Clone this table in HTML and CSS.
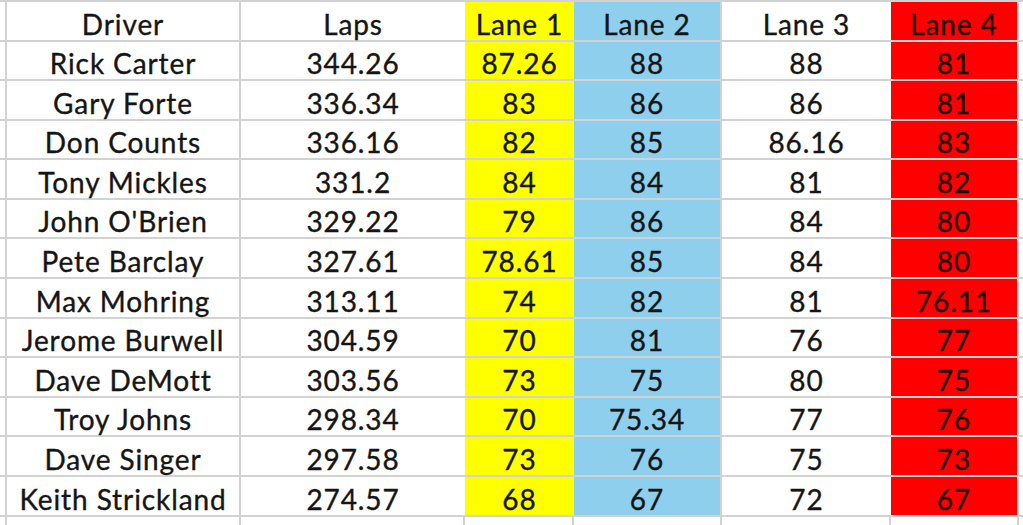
FILE: index.html
```html
<!DOCTYPE html>
<html>
<head>
<meta charset="utf-8">
<link rel="stylesheet" href="styles.css">
</head>
<body>
<div class="sheet">
  <div class="c stub"></div><div class="c drv">Driver</div><div class="c laps">Laps</div><div class="c l1">Lane 1</div><div class="c l2">Lane 2</div><div class="c l3">Lane 3</div><div class="c l4">Lane 4</div><div class="c rest"></div>

  <div class="c stub"></div><div class="c drv">Rick Carter</div><div class="c laps">344.26</div><div class="c l1">87.26</div><div class="c l2">88</div><div class="c l3">88</div><div class="c l4">81</div><div class="c rest"></div>
  <div class="c stub"></div><div class="c drv">Gary Forte</div><div class="c laps">336.34</div><div class="c l1">83</div><div class="c l2">86</div><div class="c l3">86</div><div class="c l4">81</div><div class="c rest"></div>
  <div class="c stub"></div><div class="c drv">Don Counts</div><div class="c laps">336.16</div><div class="c l1">82</div><div class="c l2">85</div><div class="c l3">86.16</div><div class="c l4">83</div><div class="c rest"></div>
  <div class="c stub"></div><div class="c drv">Tony Mickles</div><div class="c laps">331.2</div><div class="c l1">84</div><div class="c l2">84</div><div class="c l3">81</div><div class="c l4">82</div><div class="c rest"></div>
  <div class="c stub"></div><div class="c drv">John O'Brien</div><div class="c laps">329.22</div><div class="c l1">79</div><div class="c l2">86</div><div class="c l3">84</div><div class="c l4">80</div><div class="c rest"></div>
  <div class="c stub"></div><div class="c drv">Pete Barclay</div><div class="c laps">327.61</div><div class="c l1">78.61</div><div class="c l2">85</div><div class="c l3">84</div><div class="c l4">80</div><div class="c rest"></div>
  <div class="c stub"></div><div class="c drv">Max Mohring</div><div class="c laps">313.11</div><div class="c l1">74</div><div class="c l2">82</div><div class="c l3">81</div><div class="c l4">76.11</div><div class="c rest"></div>
  <div class="c stub"></div><div class="c drv">Jerome Burwell</div><div class="c laps">304.59</div><div class="c l1">70</div><div class="c l2">81</div><div class="c l3">76</div><div class="c l4">77</div><div class="c rest"></div>
  <div class="c stub"></div><div class="c drv">Dave DeMott</div><div class="c laps">303.56</div><div class="c l1">73</div><div class="c l2">75</div><div class="c l3">80</div><div class="c l4">75</div><div class="c rest"></div>
  <div class="c stub"></div><div class="c drv">Troy Johns</div><div class="c laps">298.34</div><div class="c l1">70</div><div class="c l2">75.34</div><div class="c l3">77</div><div class="c l4">76</div><div class="c rest"></div>
  <div class="c stub"></div><div class="c drv">Dave Singer</div><div class="c laps">297.58</div><div class="c l1">73</div><div class="c l2">76</div><div class="c l3">75</div><div class="c l4">73</div><div class="c rest"></div>
  <div class="c stub"></div><div class="c drv">Keith Strickland</div><div class="c laps">274.57</div><div class="c l1">68</div><div class="c l2">67</div><div class="c l3">72</div><div class="c l4">67</div><div class="c rest"></div>

  <div class="c stub e"></div><div class="c drv e"></div><div class="c laps e"></div><div class="c l1 e"></div><div class="c l2 e"></div><div class="c l3 e"></div><div class="c l4 e"></div><div class="c rest e"></div>
</div>
</body>
</html>
```

FILE: styles.css
```css
html, body {
  margin: 0;
  padding: 0;
  background: #ffffff;
  overflow: hidden;
}

.sheet {
  display: grid;
  grid-template-columns: 7px 234px 224px 109px 148px 169px 128px 4px;
  grid-template-rows: repeat(13, 39.58px) 9px;
  box-sizing: border-box;
  height: 525px;
  overflow: hidden;
  border-top: 2px solid #d2d2d2;
  width: 1023px;
  font-family: "Lato", "Liberation Sans", sans-serif;
  font-size: 28px;
  letter-spacing: 0.9px;
  color: #151515;
  -webkit-text-stroke: 0.35px #151515;
}

.c {
  box-sizing: border-box;
  border-bottom: 2px solid #d2d2d2;
  display: flex;
  align-items: flex-end;
  justify-content: center;
  padding-bottom: 2px;
  white-space: nowrap;
  line-height: 1;
}

.stub, .drv, .l2, .l4 {
  border-right: 2px solid #d2d2d2;
}

.l1 { background: #ffff00; }
.l2 { background: #8ecfee; }
.l4 {
  background: #ff0000;
  color: #1e0000;
  -webkit-text-stroke-color: #1e0000;
}

.c.e {
  background: #ffffff;
  border-right: 2px solid #d2d2d2;
  border-bottom: none;
}
.rest.e { border-right: none; }
```
